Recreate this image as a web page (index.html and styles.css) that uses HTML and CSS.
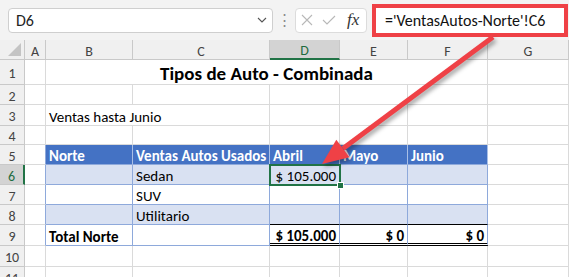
FILE: index.html
```html
<!DOCTYPE html>
<html lang="es">
<head>
    <meta charset="UTF-8">
    <meta name="viewport" content="width=device-width, initial-scale=1.0">
    <title>Tipos de Auto - Combinada</title>
    <link rel="stylesheet" href="styles.css">
</head>
<body>
    <div class="app">
        <div class="toolbar">
            <div class="namebox">
                <span>D6</span>
                <svg class="chev" width="10" height="6" viewBox="0 0 10 6"><path d="M1 1 L5 5 L9 1" fill="none" stroke="#555" stroke-width="1.1"/></svg>
            </div>
            <div class="dots">&#8942;</div>
            <div class="fxbox">
                <svg width="12" height="12" viewBox="0 0 12 12"><path d="M1 1 L11 11 M11 1 L1 11" stroke="#b8b8b8" stroke-width="1.1"/></svg>
                <svg width="14" height="12" viewBox="0 0 14 12"><path d="M1 6 L5 10 L13 2" fill="none" stroke="#b8b8b8" stroke-width="1.1"/></svg>
                <span class="fx">fx</span>
            </div>
            <div class="formula">='VentasAutos-Norte'!C6</div>
        </div>

        <div class="sheet">
            <!-- column headers -->
            <div class="c h corner"><span class="tri"></span></div>
            <div class="c h">A</div>
            <div class="c h">B</div>
            <div class="c h">C</div>
            <div class="c h hsel">D</div>
            <div class="c h">E</div>
            <div class="c h">F</div>
            <div class="c h">G</div>

            <div class="c r">1</div>
            <div class="c"></div>
            <div class="c title">Tipos de Auto - Combinada</div>
            <div class="c"></div>

            <div class="c r">2</div>
            <div class="c"></div><div class="c"></div><div class="c"></div><div class="c"></div><div class="c"></div><div class="c"></div><div class="c"></div>

            <div class="c r">3</div>
            <div class="c"></div>
            <div class="c wide">Ventas hasta Junio</div>
            <div class="c"></div><div class="c"></div><div class="c"></div><div class="c"></div>

            <div class="c r">4</div>
            <div class="c"></div><div class="c"></div><div class="c"></div><div class="c"></div><div class="c"></div><div class="c"></div><div class="c"></div>

            <div class="c r">5</div>
            <div class="c tl"></div>
            <div class="c th">Norte</div>
            <div class="c th">Ventas Autos Usados</div>
            <div class="c th">Abril</div>
            <div class="c th">Mayo</div>
            <div class="c th">Junio</div>
            <div class="c"></div>

            <div class="c r rsel">6</div>
            <div class="c tl"></div>
            <div class="c t band"></div>
            <div class="c t band">Sedan</div>
            <div class="c t band num">$ 105.000</div>
            <div class="c t band"></div>
            <div class="c t band"></div>
            <div class="c"></div>

            <div class="c r">7</div>
            <div class="c tl"></div>
            <div class="c t"></div>
            <div class="c t">SUV</div>
            <div class="c t"></div>
            <div class="c t"></div>
            <div class="c t"></div>
            <div class="c"></div>

            <div class="c r">8</div>
            <div class="c tl"></div>
            <div class="c t band"></div>
            <div class="c t band">Utilitario</div>
            <div class="c t band above"></div>
            <div class="c t band above"></div>
            <div class="c t band above"></div>
            <div class="c"></div>

            <div class="c r">9</div>
            <div class="c tl"></div>
            <div class="c t bold">Total Norte</div>
            <div class="c t"></div>
            <div class="c t total num">$ 105.000</div>
            <div class="c t total num">$ 0</div>
            <div class="c t total num">$ 0</div>
            <div class="c"></div>

            <div class="c r">10</div>
            <div class="c"></div><div class="c"></div><div class="c"></div><div class="c"></div><div class="c"></div><div class="c"></div><div class="c"></div>

            <div class="c r">11</div>
            <div class="c"></div><div class="c"></div><div class="c"></div><div class="c"></div><div class="c"></div><div class="c"></div><div class="c"></div>
        </div>

        <div class="selection"><span class="handle"></span></div>

        <svg class="arrow" width="569" height="277" viewBox="0 0 569 277">
            <line x1="493" y1="37" x2="343" y2="148.5" stroke="#ef4146" stroke-width="5"/>
            <polygon points="322,164 349.5,157.3 336.3,139.7" fill="#ef4146"/>
        </svg>
    </div>
</body>
</html>
```

FILE: styles.css
```css
body {
    margin: 0;
    font-family: Carlito, Calibri, Lato, sans-serif;
    font-size: 15px;
    background-color: #fff;
    overflow: hidden;
}

.app {
    position: relative;
    width: 569px;
    height: 277px;
    overflow: hidden;
}

.toolbar {
    display: flex;
    align-items: center;
    height: 40px;
    padding-left: 8px;
    background-color: #f3f3f3;
    box-sizing: border-box;
}

.namebox {
    display: flex;
    align-items: center;
    justify-content: space-between;
    width: 265px;
    height: 25px;
    padding: 0 5px 0 7px;
    box-sizing: border-box;
    background-color: #fff;
    border: 1px solid #cfcfcf;
    border-radius: 4px;
    color: #222;
    font-size: 16px;
}

.dots {
    width: 22px;
    text-align: center;
    color: #8a8a8a;
    font-size: 15px;
}

.fxbox {
    display: flex;
    align-items: center;
    gap: 9px;
    width: 72px;
    height: 25px;
    padding-left: 5px;
    box-sizing: border-box;
    background-color: #fff;
    border: 1px solid #dcdcdc;
    border-radius: 4px;
}

.fx {
    font-family: "Liberation Serif", serif;
    font-style: italic;
    font-size: 17px;
    color: #333;
    margin-left: 2px;
}

.formula {
    display: flex;
    align-items: center;
    margin-left: 5px;
    width: 196px;
    height: 33px;
    padding-left: 9px;
    box-sizing: border-box;
    background-color: #fff;
    border: 4px solid #ef4146;
    color: #111;
    font-size: 16px;
}

.sheet {
    display: grid;
    grid-template-columns: 25px 21px 87px 137px 70px 68px 80px 81px;
    grid-template-rows: 20px 25px 20px 21px 19px 20px 20px 20px 20px 21px 21px 20px;
}

.c {
    display: flex;
    align-items: center;
    padding: 3px 3px 0;
    box-sizing: border-box;
    border-right: 1px solid #dadada;
    border-bottom: 1px solid #dadada;
    white-space: nowrap;
    color: #000;
}

.h,
.r {
    justify-content: center;
    background-color: #f0f0f0;
    border-color: #c9c9c9;
    color: #444;
    font-size: 14px;
}

.corner {
    position: relative;
}

.tri {
    position: absolute;
    right: 3px;
    bottom: 3px;
    width: 0;
    height: 0;
    border-left: 13px solid transparent;
    border-bottom: 13px solid #c4c4c4;
}

.hsel {
    background-color: #d3d3d3;
    border-bottom: 2px solid #217346;
    color: #1e6b40;
}

.rsel {
    background-color: #d3d3d3;
    border-right: 2px solid #217346;
    color: #1e6b40;
}

.title {
    grid-column: span 5;
    justify-content: center;
    font-weight: bold;
    font-size: 19px;
}

.wide {
    grid-column: span 2;
}

.tl {
    border-right-color: #8ea9db;
}

.th {
    background-color: #4472c4;
    color: #fff;
    font-weight: bold;
    border-right-color: #a9bfe6;
    border-bottom-color: #8ea9db;
}

.t {
    border-color: #8ea9db;
}

.band {
    background-color: #d9e1f2;
}

.num {
    justify-content: flex-end;
}

.bold,
.total {
    font-weight: bold;
}

.above {
    border-bottom: 1px solid #000;
}

.total {
    border-bottom: 3px double #000;
}

.selection {
    position: absolute;
    left: 269px;
    top: 164px;
    width: 72px;
    height: 22px;
    box-sizing: border-box;
    border: 2px solid #217346;
}

.handle {
    position: absolute;
    right: -5px;
    bottom: -5px;
    width: 5px;
    height: 5px;
    background-color: #217346;
    border: 1px solid #fff;
}

.arrow {
    position: absolute;
    left: 0;
    top: 0;
    pointer-events: none;
    filter: drop-shadow(2px 3px 2px rgba(0, 0, 0, 0.35));
}
```
